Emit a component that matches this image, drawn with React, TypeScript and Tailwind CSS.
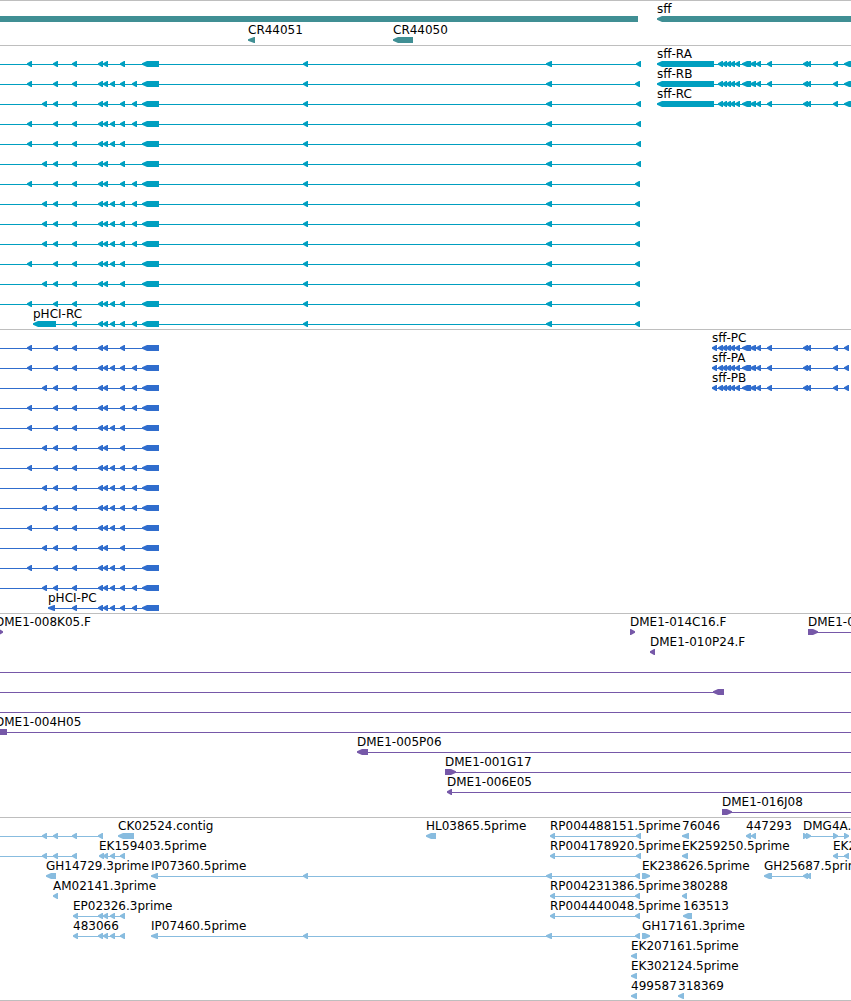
import React from 'react';

type Exon = [number, number];

interface Feature {
  label?: string;
  // label position, when it is not the first exon's start
  labelX?: number;
  forward?: boolean;
  from?: number;
  to?: number;
  exons: Exon[];
}

interface TrackProps {
  name: string;
  color: string;
  rows: Feature[][];
  className?: string;
}

// features that leave the view on the left or right
const BEFORE = -50;
const BEYOND = 4000;
const HEAD = 5;

const A: Exon = [27, 32];
const B: Exon = [42, 47];
const C: Exon = [53, 58];
const D: Exon = [72, 77];
const E: Exon = [98, 103];
const F: Exon = [103, 108];
const G: Exon = [110, 115];
const H: Exon = [120, 125];
const I: Exon = [132, 137];
const J: Exon = [142, 159];
const K: Exon = [303, 308];
const L: Exon = [546, 552];
const M: Exon = [635, 640];
const N: Exon = [636, 641];

const sffExons: Exon[] = [
  [718, 723], [722, 727], [726, 731], [730, 735], [735, 740], [742, 751],
  [750, 756], [756, 761], [767, 772], [803, 808], [806, 811], [833, 838],
];

const pHCI = (...exons: Exon[]): Feature => ({ from: BEFORE, exons });
const sffR = (label: string): Feature => ({ label, exons: [[657, 714], ...sffExons, [844, 856]] });
const sffP = (label: string): Feature => ({ label, exons: [[712, 717], ...sffExons, [844, 849]] });
const rp = (label: string, last: Exon): Feature => ({ label, exons: [[550, 555], last] });

const genes: Feature[][] = [
  [
    { exons: [[BEFORE, 638]] },
    { label: 'sff', exons: [[657, BEYOND]] },
  ],
  [
    { label: 'CR44051', exons: [[248, 255]] },
    { label: 'CR44050', exons: [[393, 413]] },
  ],
];

const transcripts: Feature[][] = [
  [pHCI(A, C, D, E, F, H, J, K, L, N), sffR('sff-RA')],
  [pHCI(A, C, D, E, F, G, H, I, J, K, L, M), sffR('sff-RB')],
  [pHCI(B, C, D, E, F, H, I, J, K, L, N), sffR('sff-RC')],
  [pHCI(A, C, D, E, F, G, H, I, J, K, L, N)],
  [pHCI(A, C, D, E, F, G, H, J, K, L, N)],
  [pHCI(B, C, D, E, F, H, J, K, L, N)],
  [pHCI(A, C, D, E, F, H, I, J, K, L, M)],
  [pHCI(B, C, D, E, F, G, H, I, J, K, L, M)],
  [pHCI(B, C, D, E, F, G, H, I, J, K, L, M)],
  [pHCI(B, C, D, E, F, G, H, I, J, K, L, M)],
  [pHCI(A, C, D, E, F, G, H, J, K, L, M)],
  [pHCI(B, C, D, E, F, H, J, K, L, M)],
  [pHCI(A, C, D, E, F, G, H, J, K, L, M)],
  [{ label: 'pHCI-RC', exons: [[33, 56], D, E, F, G, H, I, J, K, L, M] }],
];

const proteins: Feature[][] = [
  [pHCI(A, C, D, E, F, H, J), sffP('sff-PC')],
  [pHCI(A, C, D, E, F, G, H, I, J), sffP('sff-PA')],
  [pHCI(B, C, D, E, F, H, I, J), sffP('sff-PB')],
  [pHCI(A, C, D, E, F, H, I, J)],
  [pHCI(A, C, D, E, F, G, H, J)],
  [pHCI(B, C, D, E, F, H, J)],
  [pHCI(A, C, D, E, F, G, H, I, J)],
  [pHCI(B, C, D, E, F, G, H, I, J)],
  [pHCI(B, C, D, E, F, G, H, I, J)],
  [pHCI(A, C, D, E, F, G, H, J)],
  [pHCI(B, C, D, E, F, H, J)],
  [pHCI(A, C, D, E, F, G, H, J)],
  [pHCI(B, C, D, E, F, G, H, I, J)],
  [{ label: 'pHCI-PC', exons: [[48, 55], D, E, F, G, H, I, J] }],
];

const clones: Feature[][] = [
  [
    { label: 'DME1-008K05.F', labelX: -5, forward: true, exons: [[-2, 3]] },
    { label: 'DME1-014C16.F', forward: true, exons: [[630, 635]] },
    { label: 'DME1-020A09', forward: true, to: BEYOND, exons: [[808, 818]] },
  ],
  [{ label: 'DME1-010P24.F', exons: [[650, 655]] }],
  [{ from: BEFORE, to: BEYOND, exons: [] }],
  [{ from: BEFORE, exons: [[713, 724]] }],
  [{ from: BEFORE, to: BEYOND, exons: [] }],
  [{ label: 'DME1-004H05', labelX: -5, to: BEYOND, exons: [[-6, 7]] }],
  [{ label: 'DME1-005P06', to: BEYOND, exons: [[357, 368]] }],
  [{ label: 'DME1-001G17', forward: true, to: BEYOND, exons: [[445, 456]] }],
  [{ label: 'DME1-006E05', to: BEYOND, exons: [[447, 452]] }],
  [{ label: 'DME1-016J08', forward: true, to: BEYOND, exons: [[722, 732]] }],
];

const ests: Feature[][] = [
  [
    { from: BEFORE, exons: [B, C, D, E] },
    { label: 'CK02524.contig', exons: [[118, 134]] },
    { label: 'HL03865.5prime', exons: [[426, 436]] },
    rp('RP004488151.5prime', N),
    { label: '76046', exons: [[682, 689]] },
    { label: '447293', exons: [[746, 751], [751, 756]] },
    { label: 'DMG4A.', forward: true, exons: [[803, 808], [806, 811], [833, 838], [844, 849]] },
  ],
  [
    { from: BEFORE, exons: [B, C, D] },
    { label: 'EK159403.5prime', exons: [[99, 104], F, G, H] },
    rp('RP004178920.5prime', N),
    { label: 'EK259250.5prime', exons: [[682, 688]] },
    { label: 'EK214305.5prime', exons: [[833, 838], [844, 849]] },
  ],
  [
    { label: 'GH14729.3prime', exons: [[46, 56]] },
    { label: 'IP07360.5prime', exons: [[151, 158], K, L, M] },
    { label: 'EK238626.5prime', forward: true, exons: [[642, 650]] },
    { label: 'GH25687.5prime', exons: [[764, 772], [803, 808], [806, 811]] },
  ],
  [
    { label: 'AM02141.3prime', exons: [[53, 58]] },
    rp('RP004231386.5prime', M),
    { label: '380288', exons: [[682, 687]] },
  ],
  [
    { label: 'EP02326.3prime', exons: [[73, 78], E, F, G, H] },
    rp('RP004440048.5prime', M),
    { label: '163513', exons: [[683, 692]] },
  ],
  [
    { label: '483066', exons: [[73, 78], E, F, G, H] },
    { label: 'IP07460.5prime', exons: [[151, 158], K, L, M] },
    { label: 'GH17161.3prime', forward: true, exons: [[642, 650]] },
  ],
  [{ label: 'EK207161.5prime', exons: [[631, 637]] }],
  [{ label: 'EK302124.5prime', exons: [[631, 637]] }],
  [
    { label: '499587', exons: [[631, 637]] },
    { label: '318369', exons: [[678, 684]] },
  ],
];

// blunt arrow head, 6px tall at its base, pointing along the strand
const exonPoints = ([start, end]: Exon, forward?: boolean) => {
  const length = end - start;
  const head = length < HEAD + 3 ? length - 1 : HEAD;
  const tip = forward ? end : start;
  const neck = forward ? end - head : start + head;
  const tail = forward ? start : end;
  return `${tip},17.3 ${neck},15 ${tail},15 ${tail},21 ${neck},21 ${tip},18.7`;
};

const Glyph: React.FC<{ feature: Feature }> = ({ feature }) => {
  const { exons, forward } = feature;
  const from = feature.from ?? exons[0][0] + 2;
  const to = feature.to ?? exons[exons.length - 1][1] - 2;

  return (
    <g>
      <rect x={from} y={18} width={to - from} height={1} />
      {exons.map((exon, i) => (
        <polygon key={i} points={exonPoints(exon, forward)} />
      ))}
    </g>
  );
};

const Track: React.FC<TrackProps> = ({ name, color, rows, className = '' }) => (
  <section aria-label={name} className={`flex flex-col border-t border-[#bebebe] ${className}`}>
    {rows.map((features, i) => (
      <div key={i} className="relative h-5">
        <svg className={`block h-[21px] w-full overflow-hidden fill-current ${color}`} aria-hidden="true">
          {features.map((feature, j) => (
            <Glyph key={j} feature={feature} />
          ))}
        </svg>
        {features.map(
          (feature, j) =>
            feature.label && (
              <span
                key={j}
                className="absolute top-0 whitespace-nowrap text-[12px] leading-4"
                style={{ left: feature.labelX ?? feature.exons[0][0] }}
              >
                {feature.label}
              </span>
            )
        )}
      </div>
    ))}
  </section>
);

const App: React.FC = () => {
  return (
    <main className="overflow-hidden border-b border-[#bebebe] bg-white font-['DejaVu_Sans',sans-serif] text-black">
      <Track name="Genes" color="text-[#408f94]" rows={genes} className="gap-px pb-[3px]" />
      <Track name="Transcripts" color="text-[#009fc0]" rows={transcripts} className="pb-[3px]" />
      <Track name="Proteins" color="text-[#306dcd]" rows={proteins} className="pb-[3px]" />
      <Track name="Clones" color="text-[#7658a8]" rows={clones} className="pb-[3px]" />
      <Track name="ESTs" color="text-[#88bcdf]" rows={ests} className="pb-[2px]" />
    </main>
  );
};

export default App;
